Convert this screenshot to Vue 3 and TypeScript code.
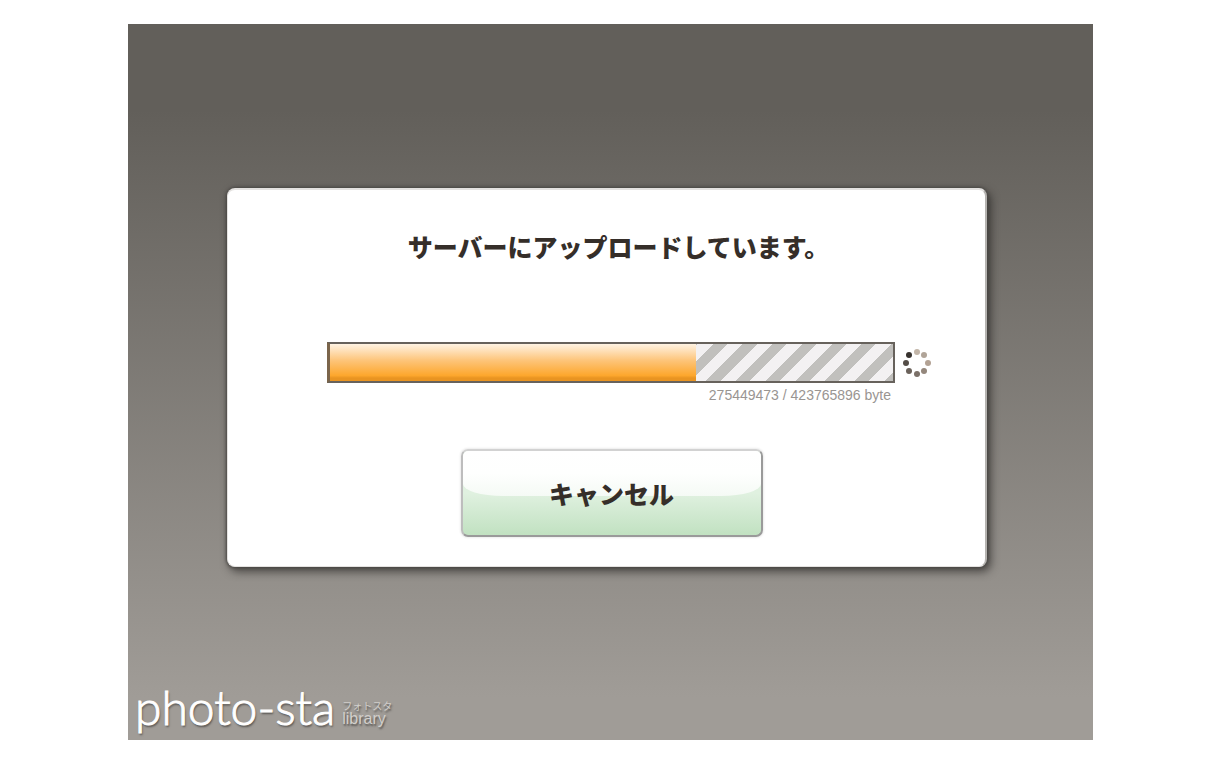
<script setup lang="ts">
import { computed, ref } from 'vue'

const sent = ref(275449473)
const total = ref(423765896)
const percent = computed(() => `${(sent.value / total.value) * 100}%`)

interface Dot { x: number; y: number; color: string }
const dots: Dot[] = [
  { x: 16, y: 5, color: '#c2b5a8' },
  { x: 23, y: 8, color: '#b0a498' },
  { x: 27, y: 16, color: '#b3a294' },
  { x: 23, y: 24, color: '#94877c' },
  { x: 16, y: 27, color: '#7b7068' },
  { x: 8, y: 24, color: '#6b625b' },
  { x: 5, y: 16, color: '#544d47' },
  { x: 8, y: 8, color: '#37322e' },
]
</script>

<template>
  <main class="page">
    <section class="stage">
      <div class="dialog" role="dialog" aria-labelledby="upload-title">
        <h1 id="upload-title" class="title">サーバーにアップロードしています。</h1>
        <div class="upload">
          <div class="bar" role="progressbar" aria-labelledby="upload-title" :aria-valuenow="sent" aria-valuemin="0" :aria-valuemax="total">
            <div class="fill" :style="{ width: percent }"></div>
          </div>
          <svg class="spinner" viewBox="0 0 32 32" aria-hidden="true">
            <circle v-for="(d, i) in dots" :key="i" :cx="d.x" :cy="d.y" r="3" :fill="d.color" />
          </svg>
          <p class="bytes">{{ sent }} / {{ total }} byte</p>
        </div>
        <button type="button" class="cancel"><span>キャンセル</span></button>
      </div>
      <footer class="brand">
        <span class="name">photo-sta</span>
        <span class="sub"><span>フォトスタ</span><span class="latin">library</span></span>
      </footer>
    </section>
  </main>
</template>

<style>
body {
  margin: 0;
  background: #fff;
}
</style>

<style scoped>
.page {
  box-sizing: border-box;
  min-height: 100vh;
  padding: 24px 128px 23px;
  display: flex;
  font-family: "Liberation Sans", "Noto Sans CJK JP", sans-serif;
  color: #352e29;
}
.stage {
  flex: 1;
  box-sizing: border-box;
  padding: 164px 106px 0 99px;
  display: flex;
  flex-direction: column;
  justify-content: space-between;
  background: linear-gradient(#625f5a 0%, #625f5a 12%, #a09c97 94%, #a09c97 100%);
}
.dialog {
  box-sizing: border-box;
  padding: 40px 0 29px;
  display: flex;
  flex-direction: column;
  border: 1px solid #e4e2e0;
  border-top-width: 2px;
  border-right: 2px solid #b5b3b0;
  border-radius: 8px;
  background: #fff;
  box-shadow: 0 0 3px 1px #4a4845, 3px 4px 9px 1px rgba(30, 28, 26, 0.6);
}
.title {
  margin: 0;
  padding-left: 24px;
  font-size: 25px;
  line-height: 36px;
  font-weight: 900;
  text-align: center;
  white-space: nowrap;
}
.upload {
  margin: 76px 52px 0 99px;
  display: grid;
  grid-template-columns: 1fr 32px;
  align-items: center;
  column-gap: 6px;
}
.bar {
  box-sizing: border-box;
  height: 41px;
  border: 2px solid #67625c;
  border-left: 3px solid #7b654b;
  background: repeating-linear-gradient(135deg, #c1c0bd 0 8px, #f3f1f2 8px 19px, #c1c0bd 19px 21px);
}
.fill {
  height: 100%;
  background: linear-gradient(#fff3e3 0%, #fdc478 45%, #fda72d 85%, #e99421 92%, #e99421 100%);
}
.spinner {
  width: 32px;
  height: 32px;
}
.bytes {
  margin: 4px 4px 0 0;
  font-size: 14px;
  line-height: 16px;
  text-align: right;
  color: #999592;
}
.cancel {
  position: relative;
  box-sizing: border-box;
  align-self: center;
  width: 302px;
  height: 88px;
  margin: 46px 0 0 10px;
  padding: 0;
  border: 2px solid #9a9a9a;
  border-top-color: #d2d2d2;
  border-left-color: #bdbdbd;
  border-radius: 7px;
  background: linear-gradient(#e0f1e0 50%, #c1e1c1 100%);
  box-shadow: 0 0 2px 1px #ececec;
  overflow: hidden;
  color: inherit;
  font-family: inherit;
  font-size: 25px;
  font-weight: 900;
}
.cancel::before {
  content: "";
  position: absolute;
  inset: 0 0 46%;
  border-radius: 0 0 40px 40px / 0 0 12px 12px;
  background: linear-gradient(#fff 0%, #fefffe 50%, #f5faf5 100%);
}
.cancel span {
  position: relative;
}
.brand {
  margin-left: -92px;
  padding-bottom: 5px;
  display: flex;
  align-items: center;
  gap: 7px;
  color: #fff;
  text-shadow: 1px 2px 2px #55524f;
}
.name {
  font-family: Lato, sans-serif;
  font-weight: 300;
  font-size: 48px;
  line-height: 56px;
  -webkit-text-stroke: 1px #fff;
}
.sub {
  margin-top: 12px;
  display: flex;
  flex-direction: column;
  font-size: 10px;
  line-height: 12px;
  color: #d2cfcb;
}
.latin {
  font-size: 16px;
}
</style>
